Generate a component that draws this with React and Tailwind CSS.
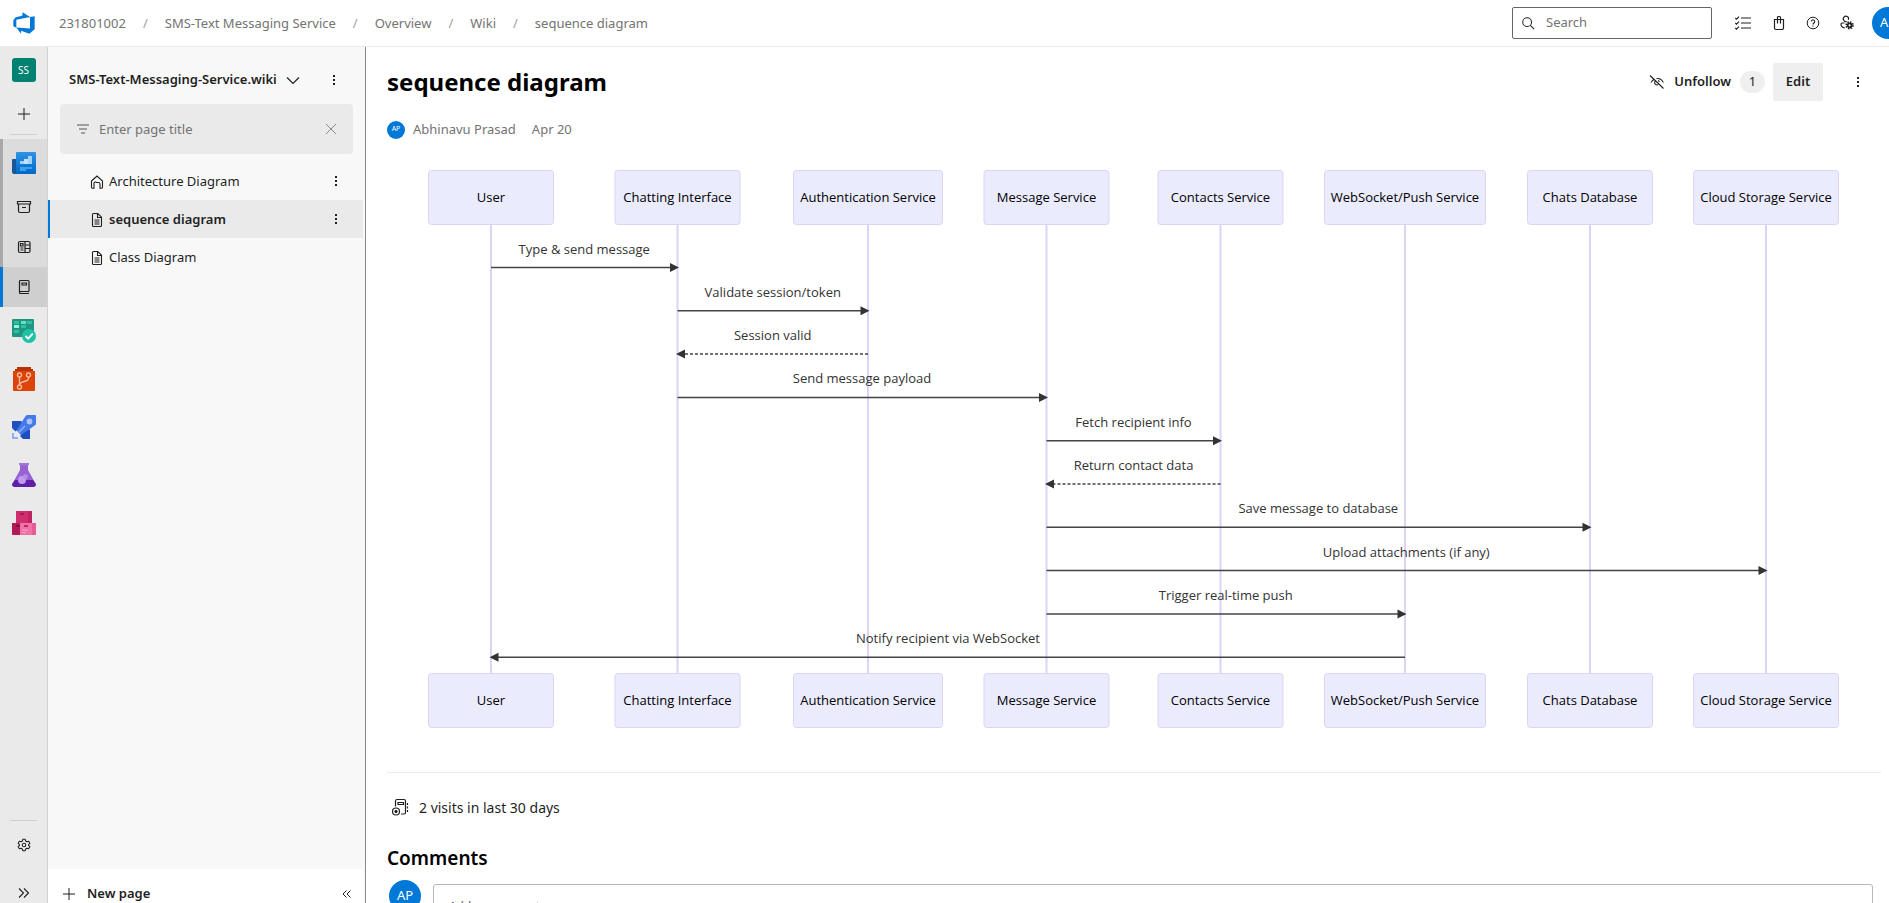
import React from "react";

const crumbs = ["231801002", "SMS-Text Messaging Service", "Overview", "Wiki", "sequence diagram"];

function Icon({ size = 16, children, className = "", viewBox = "0 0 16 16" }) {
  return (
    <svg
      width={size}
      height={size}
      viewBox={viewBox}
      fill="none"
      stroke="currentColor"
      strokeWidth="1"
      className={`shrink-0 ${className}`}
      aria-hidden="true"
    >
      {children}
    </svg>
  );
}

const MoreIcon = () => (
  <Icon>
    <g fill="currentColor" stroke="none">
      <rect x="7" y="3" width="2" height="2" />
      <rect x="7" y="7" width="2" height="2" />
      <rect x="7" y="11" width="2" height="2" />
    </g>
  </Icon>
);

const PlusIcon = () => (
  <Icon>
    <path d="M8 2v12M2 8h12" />
  </Icon>
);

const PageIcon = () => (
  <Icon>
    <path d="M3.500 2.500a1 1 0 0 1 1-1h4.300l3.700 3.700v8.300a1 1 0 0 1-1 1h-7a1 1 0 0 1-1-1z M8.500 1.500v4h4 M5.500 8h5M5.500 10h5M5.500 12h5" strokeWidth="1.100" />
  </Icon>
);

const HomeIcon = () => (
  <Icon>
    <path d="M2.500 7l5.500-5 5.500 5v6a1.200 1.200 0 0 1-1.200 1.200h-1.300V10a1.500 1.500 0 0 0-1.500-1.500h-2A1.500 1.500 0 0 0 5 10v4.200H3.700A1.200 1.200 0 0 1 2.500 13z" strokeWidth="1.100" />
  </Icon>
);

function Logo() {
  return (
    <svg width="24" height="24" viewBox="0 0 18 18" className="shrink-0" aria-hidden="true">
      <path
        fill="#0078d7"
        d="M17 4v9.740l-4 3.280-6.200-2.260V17l-3.510-4.590 10.230.8V4.440zm-3.410.49L7.850 1v2.290L2.580 4.840 1 6.870v4.610l2.260 1V6.570z"
      />
    </svg>
  );
}

function Header() {
  return (
    <header className="flex h-[47px] shrink-0 items-center overflow-hidden border-b border-[#eaeaea] bg-white pl-3">
      <a href="#home" aria-label="Azure DevOps">
        <Logo />
      </a>
      <nav aria-label="Breadcrumb" className="ml-[23px] flex items-center gap-[17px] pt-px text-[13px] text-[#737373]">
        {crumbs.map((c, i) => (
          <React.Fragment key={c}>
            {i > 0 && <span className="text-[#a0a0a0]">/</span>}
            <a href="#crumb" className="whitespace-nowrap">{c}</a>
          </React.Fragment>
        ))}
      </nav>
      <div className="-mr-[15px] ml-auto flex items-center pb-px">
        <label className="flex h-8 w-[200px] items-center gap-[11px] rounded-[2px] border border-[#666] px-2 text-[#222]">
          <Icon size={14}>
            <circle cx="7" cy="7" r="5" strokeWidth="1.200" />
            <path d="M10.600 10.600L15 15" strokeWidth="1.200" />
          </Icon>
          <input
            type="search"
            aria-label="Search"
            placeholder="Search"
            className="w-full min-w-0 bg-transparent text-[13px] outline-none placeholder:text-[#737373]"
          />
        </label>
        <div className="ml-[13px] flex items-center text-[#1f1f1f]">
          <button type="button" aria-label="Work items" className="flex h-9 w-9 items-center justify-center">
            <Icon>
              <path d="M6 3h10M6 8h10M6 13h10M.3 3l1.200 1.200L4 1.700M.3 8l1.200 1.200L4 6.700M.3 13l1.200 1.200L4 11.700" strokeWidth="1.200" />
            </Icon>
          </button>
          <button type="button" aria-label="Marketplace" className="flex h-9 w-9 items-center justify-center">
            <Icon>
              <path d="M3.500 4.500h9v8.500a1.500 1.500 0 0 1-1.500 1.500H5A1.500 1.500 0 0 1 3.500 13zM6.500 8.500V2.500a1 1 0 0 1 1-1h1a1 1 0 0 1 1 1v6" strokeWidth="1.200" />
            </Icon>
          </button>
          <button type="button" aria-label="Help" className="flex h-9 w-8 items-center justify-center">
            <Icon>
              <circle cx="8" cy="8" r="5.800" />
              <path d="M6.300 6.600a1.700 1.700 0 1 1 2.600 1.450c-.6.4-.9.700-.9 1.450M8 10.400v1.200" strokeWidth="1.100" />
            </Icon>
          </button>
          <button type="button" aria-label="User settings" className="flex h-9 w-9 items-center justify-center">
            <Icon>
              <path d="M9.300 4.800A2.600 2.600 0 1 0 5 5.500M5.500 8H3.200A1.200 1.200 0 0 0 2 9.200c0 2 1.400 3.300 3.800 3.700M5 5.500c.6 1 1.700 1.400 2.700 1.100" strokeWidth="1.200" />
              <circle cx="10.600" cy="10.300" r="2" strokeWidth="1.800" />
              <circle cx="10.600" cy="10.300" r="3.400" strokeWidth="1.600" strokeDasharray="1.500 1.170" />
            </Icon>
          </button>
          <button type="button" aria-label="Account" className="ml-[7px] flex h-8 w-8 shrink-0 items-center justify-center rounded-full bg-[#0078d7] text-[13px] text-white">
            AP
          </button>
        </div>
      </div>
    </header>
  );
}

const BoardsIcon = () => (
  <svg width="24" height="24" viewBox="0 0 24 24" aria-hidden="true">
    <defs>
      <linearGradient id="ov" x1="0" y1="0" x2="0" y2="1">
        <stop offset="0" stopColor="#2f94e4" />
        <stop offset="1" stopColor="#0067c8" />
      </linearGradient>
    </defs>
    <path d="M1 8h4v15H2a2 2 0 0 1-2-2V9a1 1 0 0 1 1-1z" fill="#15599b" />
    <path d="M5 1h18a1 1 0 0 1 1 1v20a1 1 0 0 1-1 1H3a2 2 0 0 0 1-2V2a1 1 0 0 1 1-1z" fill="url(#ov)" />
    <path d="M8 10h4v3H8z" fill="#9fd2ff" />
    <path d="M12 8h4v5h-4z" fill="#c4e3ff" />
    <path d="M16 5h4v8h-4z" fill="#9fd2ff" />
    <path d="M8 16h12v2h-6v2H8z" fill="#3fa0ec" />
  </svg>
);

const TestIcon = () => (
  <svg width="24" height="24" viewBox="0 0 24 24" aria-hidden="true">
    <rect width="22" height="18" rx="1" fill="#219580" />
    <path d="M2 2h5v3H2zM15 2h5v3h-5zM2 11h5v3H2zM9 6h5v3H9z" fill="#2fbfa2" />
    <path d="M9 2h5v3H9z" fill="#65dfc6" />
    <path d="M2 6h5v3H2z" fill="#92f3df" />
    <circle cx="17" cy="17" r="7" fill="#1fc2a7" />
    <path d="M13.500 17l2.700 2.700 4.600-5" fill="none" stroke="#fff" strokeWidth="1.900" />
  </svg>
);

const ReposIcon = () => (
  <svg width="24" height="24" viewBox="0 0 24 24" aria-hidden="true">
    <path d="M5 0h14v2h2v3H3V2h2z" fill="#b83202" />
    <path d="M1 4h22v19a1 1 0 0 1-1 1H2a1 1 0 0 1-1-1z" fill="#dc4409" />
    <g fill="none" stroke="#ffb89e" strokeWidth="1.400">
      <circle cx="7.500" cy="8" r="2" />
      <circle cx="16.500" cy="8" r="2" />
      <circle cx="7.500" cy="20" r="2" />
      <path d="M7.500 10v8M16.500 10v1.500c0 1-.5 1.500-1.500 2l-5.500 2c-1.300.5-2 1.200-2 2.500" />
    </g>
  </svg>
);

const PipelinesIcon = () => (
  <svg width="24" height="24" viewBox="0 0 24 24" aria-hidden="true">
    <path d="M0 6h9l9 9v9h-7L0 13z" fill="#1d4fc0" />
    <path d="M4 16l9-14c1-1.500 1.500-2 3-2h7a1 1 0 0 1 1 1v7c0 1.500-.5 2-2 3L9 20z" fill="#4379e8" />
    <path d="M4.500 15.500L9 20l-2 2-5-4z" fill="#eaeaea" />
    <circle cx="17.500" cy="6.500" r="2.900" fill="#a9c4fa" />
    <path d="M6.500 17.500L13 11" stroke="#8fb0f6" strokeWidth="1.600" />
    <path d="M0 18h2v4h4v2H0z" fill="#8fb0f6" />
  </svg>
);

const TestPlansIcon = () => (
  <svg width="24" height="24" viewBox="0 0 24 24" aria-hidden="true">
    <path d="M8 1h8v6l7.500 13.500A2.300 2.300 0 0 1 21.500 24h-19A2.300 2.300 0 0 1 .5 20.500L8 7z" fill="#9763d3" />
    <path d="M3 17h18l2.500 3.500a2.300 2.300 0 0 1-2 3.500h-19a2.300 2.300 0 0 1-2-3.500z" fill="#5f1fa8" />
    <path d="M7 0h10v2H7z" fill="#a276dc" />
    <circle cx="10" cy="17" r="4" fill="#c29af0" />
    <circle cx="13.500" cy="13.500" r="2.500" fill="#b48be6" />
  </svg>
);

const ArtifactsIcon = () => (
  <svg width="24" height="24" viewBox="0 0 24 24" aria-hidden="true">
    <path d="M4 0h16v12H4z" fill="#cf2f6f" />
    <path d="M16 0h4v12h-4z" fill="#bb2361" />
    <path d="M8 2h4v2H8z" fill="#a51950" />
    <path d="M0 12h8v12H1a1 1 0 0 1-1-1z" fill="#b01a57" />
    <path d="M4 14h4v2H4z" fill="#850f3f" />
    <path d="M8 12h16v11a1 1 0 0 1-1 1H8z" fill="#f071a6" />
    <path d="M20 12h4v11a1 1 0 0 1-1 1h-3z" fill="#e35c95" />
    <path d="M12 14h4v2h-4z" fill="#c22765" />
    <path d="M10 19h6M10 21.500h3.500" stroke="#f9a6c8" strokeWidth="1" />
  </svg>
);

function RailButton({ label, children, className = "h-12" }) {
  return (
    <button type="button" aria-label={label} className={`flex w-full shrink-0 items-center justify-center ${className}`}>
      {children}
    </button>
  );
}

function Rail() {
  return (
    <nav aria-label="Project" className="flex w-12 shrink-0 flex-col border-r border-[#d2d2d2] bg-[#eaeaea] text-[#1f1f1f]">
      <RailButton label="SMS-Text Messaging Service" className="h-[47px] pb-px">
        <span className="flex size-6 items-center justify-center rounded-[3px] bg-[#008272] text-[10px] text-white">SS</span>
      </RailButton>
      <RailButton label="Create new" className="h-10">
        <PlusIcon />
      </RailButton>
      <div className="mx-[10px] mb-1 h-px shrink-0 bg-[#cfcfcf]" />
      <div className="flex shrink-0 flex-col border-l-[3px] border-[#a8a8a8] bg-[#dcdcdc]">
        <RailButton label="Overview" className="h-12 pr-[2px]">
          <BoardsIcon />
        </RailButton>
        <RailButton label="Summary" className="h-10 pr-[3px]">
          <Icon>
            <path d="M1.500 2.500h13v2.500h-13zM2.500 5v7a1.500 1.500 0 0 0 1.500 1.500h8a1.500 1.500 0 0 0 1.500-1.500V5M6 8.500h4" strokeWidth="1.200" />
          </Icon>
        </RailButton>
        <RailButton label="Dashboards" className="h-10 pr-[3px]">
          <Icon>
            <rect x="2.500" y="2.500" width="11.500" height="11" rx="1.500" strokeWidth="1.200" />
            <path d="M9 2.500v11M9 6h5M9 9.500h5M4.500 9h3M4.500 11h3M4.500 4.500h2.500v2.500H4.500z" strokeWidth="1.200" />
          </Icon>
        </RailButton>
      </div>
      <div className="flex shrink-0 flex-col border-l-[3px] border-[#0078d7] bg-[#cfcfcf]">
        <RailButton label="Wiki" className="h-10 pr-[3px]">
          <Icon>
            <path d="M13 12.500H4.500a1 1 0 0 0 0 2H13M3.500 13.500v-11a1 1 0 0 1 1-1h7.500a1 1 0 0 1 1 1v10M6 4h4.500v2H6z" strokeWidth="1.200" />
          </Icon>
        </RailButton>
      </div>
      <RailButton label="Boards"><TestIcon /></RailButton>
      <RailButton label="Repos"><ReposIcon /></RailButton>
      <RailButton label="Pipelines"><PipelinesIcon /></RailButton>
      <RailButton label="Test Plans"><TestPlansIcon /></RailButton>
      <RailButton label="Artifacts"><ArtifactsIcon /></RailButton>
      <div className="mx-[10px] mt-auto mb-1 h-px shrink-0 bg-[#cfcfcf]" />
      <RailButton label="Project settings" className="h-10">
        <Icon size={14}>
          <path
            d="M6.600 1.500h2.800l.5 2 1.400.8 2-.6 1.400 2.400-1.500 1.400v1.000l1.500 1.400-1.400 2.400-2-.6-1.400.8-.5 2H6.600l-.5-2-1.400-.8-2 .6-1.400-2.400 1.500-1.400V7.500L1.300 6.100l1.400-2.400 2 .6 1.400-.8z"
            strokeWidth="1.200"
            strokeLinejoin="round"
          />
          <circle cx="8" cy="8" r="2" strokeWidth="1.200" />
        </Icon>
      </RailButton>
      <RailButton label="Expand" className="h-[38px] pt-[18px]">
        <Icon>
          <path d="M3 3.500L7.500 8 3 12.500M8 3.500l4.500 4.500L8 12.500" strokeWidth="1.100" />
        </Icon>
      </RailButton>
    </nav>
  );
}

const pages = [
  { title: "Architecture Diagram", icon: HomeIcon, more: true },
  { title: "sequence diagram", icon: PageIcon, more: true, current: true },
  { title: "Class Diagram", icon: PageIcon },
];

function Sidebar() {
  return (
    <aside className="flex w-[318px] shrink-0 flex-col border-r border-[#8a8a8a] bg-[#f8f8f8] pr-[2px] text-[13px] text-[#1f1f1f]">
      <div className="flex h-[57px] shrink-0 items-center pt-2 pr-[21px] pl-[21px]">
        <button type="button" className="flex items-center gap-2 font-semibold whitespace-nowrap">
          SMS-Text-Messaging-Service.wiki
          <Icon>
            <path d="M2 5.500l6 6 6-6" strokeWidth="1.200" />
          </Icon>
        </button>
        <button type="button" aria-label="More wiki options" className="ml-auto">
          <MoreIcon />
        </button>
      </div>
      <label className="mr-[10px] ml-3 flex h-[50px] shrink-0 items-center gap-2 rounded bg-[#eaeaea] pr-[14px] pl-[15px] text-[#555]">
        <Icon>
          <path d="M2 4h12M4 8h8M6 12h4" />
        </Icon>
        <input
          aria-label="Filter pages"
          placeholder="Enter page title"
          className="w-full min-w-0 bg-transparent pt-px outline-none placeholder:text-[#737373]"
        />
        <Icon className="text-[#888]">
          <path d="M3 3l10 10M13 3L3 13" />
        </Icon>
      </label>
      <ul className="mt-2 flex-1">
        {pages.map(({ title, icon: PIcon, more, current }) => (
          <li
            key={title}
            className={`flex h-[38px] items-center border-l-2 pr-[19px] pl-[39px] ${
              current ? "border-[#0078d7] bg-[#eaeaea] font-semibold" : "border-transparent"
            }`}
          >
            <a href="#page" className="flex items-center gap-1 pt-px">
              <PIcon />
              {title}
            </a>
            {more && (
              <button type="button" aria-label={`More options for ${title}`} className="ml-auto">
                <MoreIcon />
              </button>
            )}
          </li>
        ))}
      </ul>
      <div className="flex h-[34px] shrink-0 items-center bg-white pt-[15px] pr-2 pl-[13px]">
        <button type="button" className="flex items-center gap-[10px] font-semibold">
          <PlusIcon />
          New page
        </button>
        <button type="button" aria-label="Collapse" className="ml-auto">
          <Icon>
            <path d="M7.500 4.500L4 8l3.500 3.500M11.500 4.500L8 8l3.500 3.500" />
          </Icon>
        </button>
      </div>
    </aside>
  );
}

const actors = [
  { name: "User", x: 104, w: 126 },
  { name: "Chatting Interface", x: 290.5, w: 126 },
  { name: "Authentication Service", x: 481, w: 150 },
  { name: "Message Service", x: 659.5, w: 126 },
  { name: "Contacts Service", x: 833.5, w: 126 },
  { name: "WebSocket/Push Service", x: 1018, w: 162 },
  { name: "Chats Database", x: 1203, w: 126 },
  { name: "Cloud Storage Service", x: 1379, w: 146 },
];

const messages = [
  { text: "Type & send message", from: 0, to: 1 },
  { text: "Validate session/token", from: 1, to: 2 },
  { text: "Session valid", from: 2, to: 1, dashed: true },
  { text: "Send message payload", from: 1, to: 3 },
  { text: "Fetch recipient info", from: 3, to: 4 },
  { text: "Return contact data", from: 4, to: 3, dashed: true },
  { text: "Save message to database", from: 3, to: 6 },
  { text: "Upload attachments (if any)", from: 3, to: 7 },
  { text: "Trigger real-time push", from: 3, to: 5 },
  { text: "Notify recipient via WebSocket", from: 5, to: 0 },
];

const TOP = 16;
const BOTTOM = 519;
const BOX = 55;

function SequenceDiagram() {
  return (
    <svg viewBox="0 0 1494 584" className="mt-3 block h-auto w-full font-['Open_Sans',sans-serif]" role="img" aria-label="Sequence diagram">
      {actors.map((a) => (
        <line key={a.name} x1={a.x} x2={a.x} y1={TOP + BOX} y2={BOTTOM} stroke="#dcd3f5" strokeWidth="2" />
      ))}
      {[TOP, BOTTOM].map((y) =>
        actors.map((a) => (
          <g key={a.name + y}>
            <rect x={a.x - a.w / 2 + 0.5} y={y + 0.5} width={a.w - 1} height={BOX - 1} rx="3" fill="#ebebfe" stroke="#dcd3f5" />
            <text x={a.x} y={y + 32} textAnchor="middle" fontSize="13" fill="#000">
              {a.name}
            </text>
          </g>
        ))
      )}
      {messages.map((m, i) => {
        const y = 113.5 + i * 43.3;
        const x1 = actors[m.from].x;
        const x2 = actors[m.to].x;
        const d = x2 > x1 ? 1 : -1;
        const tip = x2 + d * 1.5;
        return (
          <g key={m.text}>
            <line
              x1={x1}
              x2={x2 - d * 6}
              y1={y}
              y2={y}
              stroke="#444"
              strokeWidth="1.500"
              strokeDasharray={m.dashed ? "3 2" : undefined}
            />
            <path d={`M${tip} ${y}l${-9 * d} -4.500v9z`} fill="#333" />
            <text x={(x1 + x2) / 2} y={y - 14} textAnchor="middle" fontSize="13" fill="#333">
              {m.text}
            </text>
          </g>
        );
      })}
    </svg>
  );
}

function Page() {
  return (
    <main className="min-w-0 flex-1 overflow-hidden bg-white pr-2 pl-[21px] text-[13px] text-[#1f1f1f]">
      <div className="flex h-[70px] items-center">
        <h1 className="text-2xl leading-9 font-bold whitespace-nowrap text-black">sequence diagram</h1>
        <div className="ml-auto flex items-center pr-[15px]">
          <button type="button" className="flex items-center gap-[9px] font-semibold">
            <Icon>
              <path d="M1 1.500l13.500 13M2 8.500C3 6.500 4.200 5.500 5.500 5M7.500 4.500c3-.3 5.500 1.200 6.800 4M6 7.200a2.400 2.400 0 0 0 3.200 3.400M9 6.600a2.400 2.400 0 0 1 1.400 1.600" strokeWidth="1.100" />
            </Icon>
            Unfollow
            <span className="flex h-[22px] w-[25px] items-center justify-center rounded-full bg-[#efefef] font-normal">1</span>
          </button>
          <button type="button" className="ml-2 h-[38px] w-[50px] rounded-[2px] bg-[#efefef] font-semibold">
            Edit
          </button>
          <button type="button" aria-label="More actions" className="ml-[27px]">
            <MoreIcon />
          </button>
        </div>
      </div>
      <div className="flex h-[25px] items-center text-[#737373]">
        <span className="flex size-[18px] items-center justify-center rounded-full bg-[#0078d7] text-[7px] text-white">AP</span>
        <span className="ml-2">Abhinavu Prasad</span>
        <span className="ml-4">Apr 20</span>
      </div>
      <SequenceDiagram />
      <section className="mt-[34px] border-t border-[#eaeaea] pt-[22px]">
        <div className="flex h-[24px] items-center gap-[10px] pl-1 text-[14px]">
          <Icon size={18} viewBox="0 0 18 18">
            <path d="M4.500 8.500V3a1.500 1.500 0 0 1 1.500-1.500h7A1.500 1.500 0 0 1 14.500 3v11.500a1.500 1.500 0 0 1-1.500 1.500h-3M7 4.500h5.500v2H7zM16.500 5v2M16.500 8.500v2M16.500 12v2" strokeWidth="1.200" />
            <circle cx="5" cy="13.500" r="3.500" strokeWidth="1.200" />
            <circle cx="5" cy="13.500" r="1.200" fill="currentColor" />
          </Icon>
          2 visits in last 30 days
        </div>
      </section>
      <section>
        <h2 className="mt-[25px] h-[28px] text-[19px] leading-7 font-semibold text-black">Comments</h2>
        <div className="mt-2 flex items-start gap-3 pr-2 pl-[2px]">
          <span className="flex size-8 shrink-0 items-center justify-center rounded-full bg-[#0078d7] text-[13px] text-white">AP</span>
          <textarea
            aria-label="Add a comment"
            placeholder="Add a comment..."
            rows={3}
            className="mt-1 w-full resize-none rounded-[3px] border border-[#b8b8b8] px-[14px] py-3 italic outline-none placeholder:text-[#666]"
          />
        </div>
      </section>
    </main>
  );
}

export default function App() {
  return (
    <div className="flex h-screen flex-col overflow-hidden font-['Noto_Sans',sans-serif]">
      <Header />
      <div className="flex min-h-0 flex-1">
        <Rail />
        <Sidebar />
        <Page />
      </div>
    </div>
  );
}
